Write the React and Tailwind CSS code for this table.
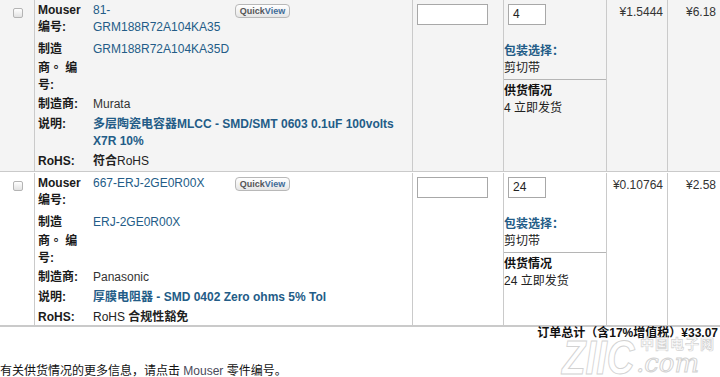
import React from "react";

function Checkbox() {
  return (
    <div className="ml-[13px] mt-[8px] w-[10px] h-[10px] rounded-[2px] border border-[#b4b4b4] bg-gradient-to-b from-white to-[#e2e2e2]" />
  );
}

function QuickView() {
  return (
    <div className="ml-[1px] mt-[2px] h-[14px] w-[55px] rounded-[4px] border border-[#b8b8b8] bg-gradient-to-b from-white to-[#e6e6e6] flex items-center justify-center text-[9px] leading-none font-bold">
      <span className="text-[#555]">Quick</span>
      <span className="text-[#3f6c98]">View</span>
    </div>
  );
}

function DRow({ label, children, extra, wide, className = "" }) {
  return (
    <div className={`flex ${className}`}>
      <div className="w-[45px] mr-[10px] shrink-0 font-bold text-[#1a1a1a]">{label}</div>
      <div className={wide ? "flex-1 min-w-0" : "w-[141px] shrink-0"}>{children}</div>
      {extra}
    </div>
  );
}

const Dot = () => <span className="[font-family:'Noto_Sans_CJK_TC',sans-serif]">。</span>;

function Item({ bg, h, top, mouser, mfr, maker, desc, rohs, qty, unit, ext }) {
  return (
    <div className={`flex ${bg} ${h} ${top}`}>
      <div className="w-[35px] shrink-0 border-r border-[#cacaca]">
        <Checkbox />
      </div>
      <div className="w-[378px] shrink-0 border-r border-[#cacaca] pl-[3px] pr-[4px] pt-[2px]">
        <DRow label="Mouser 编号:" extra={<QuickView />}>
          <span className="text-[#235c87]">{mouser}</span>
        </DRow>
        <DRow className="mt-[5px]" label={<>制造商<Dot /> 编号:</>}>
          <span className="text-[#235c87]">{mfr}</span>
        </DRow>
        <DRow className="mt-[2px]" label="制造商:">
          <span className="text-[#333]">{maker}</span>
        </DRow>
        <DRow className="mt-[3px]" label="说明:" wide>
          <span className="text-[#235c87] font-bold">{desc}</span>
        </DRow>
        <DRow className="mt-[3px]" label="RoHS:" wide>
          <span className="text-[#222]">{rohs}</span>
        </DRow>
      </div>
      <div className="w-[91px] shrink-0 border-r border-[#cacaca]">
        <div className="ml-[4px] mt-[4px] w-[71px] h-[21px] border border-[#a8a8a8] bg-white" />
      </div>
      <div className="w-[103px] shrink-0 border-r border-[#cacaca]">
        <div className="ml-[4px] mt-[4px] w-[38px] h-[21px] border border-[#a8a8a8] bg-white pl-[4px] leading-[19px] text-[#222]">
          {qty}
        </div>
        <div className="mt-[18px] pb-[2px] border-b border-[#b5b5b5]">
          <div className="font-bold text-[#235c87]">包装选择：</div>
          <div className="text-[#222]">剪切带</div>
        </div>
        <div className="pt-[3px]">
          <div className="font-bold text-[#111]">供货情况</div>
          <div className="text-[#222]">{qty} 立即发货</div>
        </div>
      </div>
      <div className="w-[61px] shrink-0 border-r border-[#cacaca] pt-[4px] pr-[4px] text-right text-[#333]">
        {unit}
      </div>
      <div className="flex-1 pt-[4px] pr-[4px] text-right text-[#333]">{ext}</div>
    </div>
  );
}

export default function App() {
  return (
    <div className="relative w-[720px] h-[377px] overflow-hidden bg-white text-[12px] leading-[17px] [font-family:'Liberation_Sans','Noto_Sans_CJK_SC',sans-serif]">
      <Item
        bg="bg-[#f4f4f4]"
        h="h-[171px]"
        top=""
        mouser="81-GRM188R72A104KA35"
        mfr="GRM188R72A104KA35D"
        maker="Murata"
        desc="多层陶瓷电容器MLCC - SMD/SMT 0603 0.1uF 100volts X7R 10%"
        rohs={<><span className="font-bold">符合</span>RoHS</>}
        qty="4"
        unit="¥1.5444"
        ext="¥6.18"
      />
      <Item
        bg="bg-white"
        h="h-[156px]"
        top="border-t border-b-2 border-[#cacaca] pt-[1px]"
        mouser="667-ERJ-2GE0R00X"
        mfr="ERJ-2GE0R00X"
        maker="Panasonic"
        desc="厚膜电阻器 - SMD 0402 Zero ohms 5% Tol"
        rohs={<>RoHS <span className="font-bold">合规性豁免</span></>}
        qty="24"
        unit="¥0.10764"
        ext="¥2.58"
      />
      <div className="h-[38px] pr-[2px] text-right font-bold leading-[12px] text-[#111]">
        订单总计（含17%增值税）¥33.07
      </div>
      <div className="leading-[12px] text-[#111]">
        有关供货情况的更多信息，请点击 <span className="text-[#4a4a5a]">Mouser</span> 零件编号。
      </div>

      <div className="pointer-events-none absolute left-[562px] top-[334px] origin-left scale-x-[0.8] text-[48px] font-bold italic leading-none text-white/70 [-webkit-text-stroke:1px_#d2d2d2]">
        ZIIC
      </div>
      <div className="pointer-events-none absolute left-[636px] top-[350px] text-[26px] italic leading-none text-white/70 [-webkit-text-stroke:1px_#d2d2d2] [font-family:'DejaVu_Serif',serif]">
        .com
      </div>
      <div className="pointer-events-none absolute left-[640px] top-[337px] text-[14px] font-bold leading-none tracking-[1px] text-white/70 [-webkit-text-stroke:0.7px_#d2d2d2]">
        中国电子网
      </div>
    </div>
  );
}
